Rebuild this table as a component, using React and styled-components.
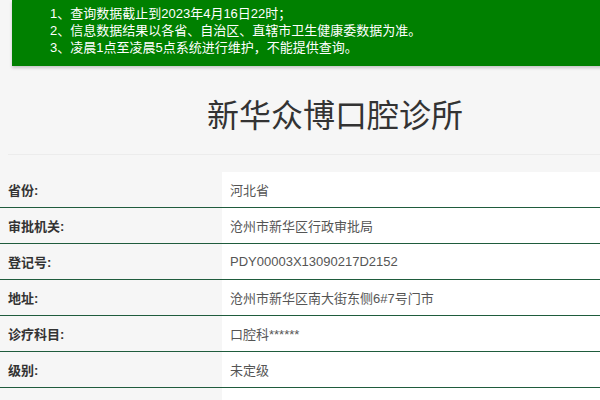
import { Fragment } from 'react';
import styled, { createGlobalStyle } from 'styled-components';

const Global = createGlobalStyle`
  html, body {
    margin: 0;
    padding: 0;
    background: #f6f6f6;
    font-family: "Liberation Sans", "Noto Sans CJK SC", sans-serif;
    overflow: hidden;
  }
`;

const Page = styled.div`
  width: 600px;
  height: 400px;
  overflow: hidden;
`;

const Notice = styled.div`
  margin-left: 12px;
  width: 620px;
  height: 66px;
  box-sizing: border-box;
  padding: 5px 0 0 38px;
  background: #008000;
  color: #fff;
  font-size: 13px;
  line-height: 17px;
  box-shadow: 0 2px 3px rgba(0, 0, 0, 0.2);
`;

const Title = styled.h1`
  margin: 0 0 0 8px;
  padding: 30px 0 18px 62px;
  text-align: center;
  font-size: 32px;
  font-weight: normal;
  line-height: 40px;
  color: #333;
  border-bottom: 1px solid #ececec;
`;

const Table = styled.div`
  margin-top: 17px;
  display: grid;
  grid-template-columns: 222px 1fr;
`;

const Label = styled.div`
  height: 35px;
  display: flex;
  align-items: center;
  padding-left: 8px;
  font-size: 13px;
  font-weight: bold;
  color: #333;
  border-bottom: 1px solid #1f5c3d;
`;

const Value = styled.div`
  height: 35px;
  display: flex;
  align-items: center;
  padding-left: 8px;
  font-size: 13px;
  color: #555;
  background: #fff;
  border-bottom: 1px solid #1f5c3d;
`;

const rows = [
  ['省份:', '河北省'],
  ['审批机关:', '沧州市新华区行政审批局'],
  ['登记号:', 'PDY00003X13090217D2152'],
  ['地址:', '沧州市新华区南大街东侧6#7号门市'],
  ['诊疗科目:', '口腔科******'],
  ['级别:', '未定级'],
  ['', ''],
];

export default function App() {
  return (
    <Page>
      <Global />
      <Notice>
        <div>1、查询数据截止到2023年4月16日22时；</div>
        <div>2、信息数据结果以各省、自治区、直辖市卫生健康委数据为准。</div>
        <div>3、凌晨1点至凌晨5点系统进行维护，不能提供查询。</div>
      </Notice>
      <Title>新华众博口腔诊所</Title>
      <Table>
        {rows.map(([k, v], i) => (
          <Fragment key={i}>
            <Label>{k}</Label>
            <Value>{v}</Value>
          </Fragment>
        ))}
      </Table>
    </Page>
  );
}
